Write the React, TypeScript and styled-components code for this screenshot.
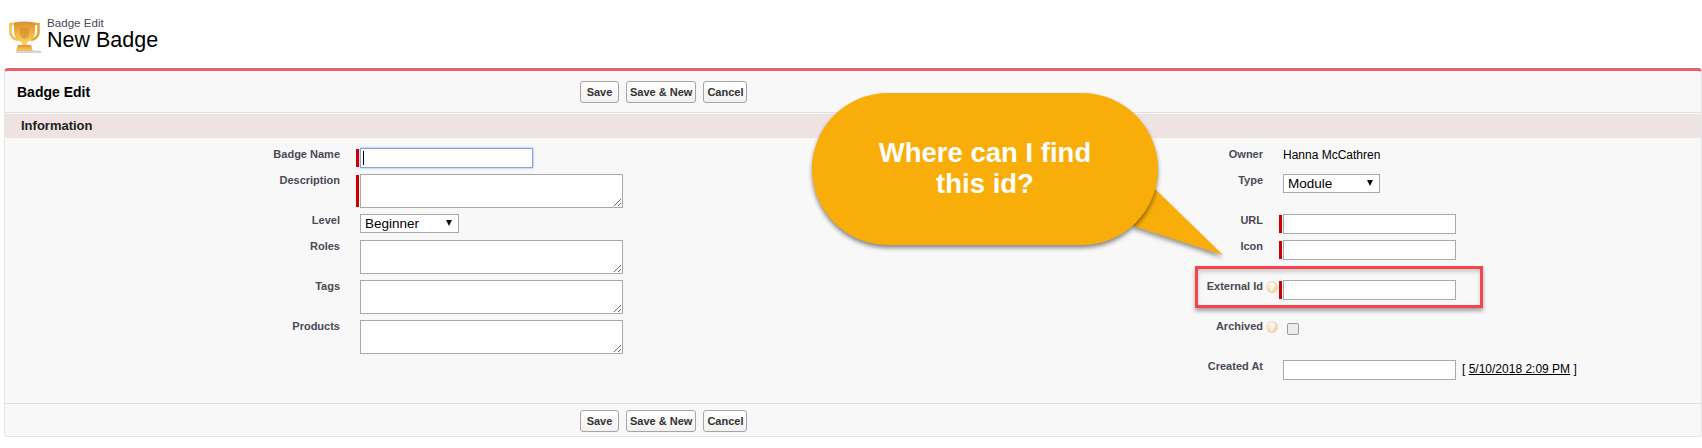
import * as React from 'react';
import styled, { createGlobalStyle } from 'styled-components';

const GlobalStyle = createGlobalStyle`
	html, body {
		margin: 0;
		padding: 0;
		background: #fff;
		font-family: "Liberation Sans", Arial, sans-serif;
	}
`;

const Page = styled.div`
	position: relative;
	width: 1702px;
	height: 448px;
	overflow: hidden;
`;

const PageHeader = styled.header`
	height: 68px;
	padding: 16px 0 0 9px;
	box-sizing: border-box;
	display: flex;
	align-items: flex-start;
	gap: 6px;
`;

const Titles = styled.div`
	display: flex;
	flex-direction: column;
`;

const Subtitle = styled.div`
	font-size: 11.6px;
	line-height: 13px;
	color: #4a4a56;
`;

const PageTitle = styled.h1`
	margin: 0;
	font-size: 21.5px;
	line-height: 22px;
	font-weight: 400;
	color: #000;
`;

const Panel = styled.section`
	margin-left: 4px;
	height: 369px;
	box-sizing: border-box;
	background: #f8f8f8;
	border: 1px solid #e6e6e6;
	border-top: 3px solid #e6636c;
	border-radius: 4px;
	display: flex;
	flex-direction: column;
`;

const ButtonBar = styled.div<{ $top?: boolean }>`
	flex: none;
	height: ${p => (p.$top ? 42 : 33)}px;
	box-sizing: border-box;
	display: flex;
	align-items: ${p => (p.$top ? 'center' : 'flex-start')};
	padding-top: ${p => (p.$top ? 0 : 6)}px;
	border-${p => (p.$top ? 'bottom' : 'top')}: 1px solid #dfdfdf;
`;

const BarTitle = styled.h2`
	margin: 0 0 0 12px;
	width: 563px;
	font-size: 14px;
	font-weight: 700;
	color: #000;
`;

const BarSpacer = styled.div`
	width: 575px;
`;

const Buttons = styled.div`
	display: flex;
	gap: 7px;
`;

const Button = styled.button`
	height: 22px;
	min-width: 39px;
	padding: 0 3px;
	box-sizing: border-box;
	border: 1px solid #a5a5a5;
	border-radius: 3px;
	background: linear-gradient(#fff, #f1f1f1);
	font-family: inherit;
	font-size: 11px;
	font-weight: 700;
	color: #333;
`;

const SectionBar = styled.div`
	flex: none;
	height: 24px;
	margin-top: 1px;
	padding-left: 16px;
	background: #eee2e2;
	font-size: 13px;
	font-weight: 700;
	line-height: 24px;
	color: #1f1f1f;
`;

const FormGrid = styled.div`
	flex: 1;
	padding-top: 10px;
	display: flex;
`;

const Column = styled.div<{ $width: number }>`
	width: ${p => p.$width}px;
	display: flex;
	flex-direction: column;
`;

const Row = styled.div<{ $tall?: boolean }>`
	height: ${p => (p.$tall ? 40 : 26)}px;
	display: flex;
	align-items: flex-start;
`;

const Label = styled.label<{ $width: number }>`
	width: ${p => p.$width}px;
	flex: none;
	text-align: right;
	font-size: 11px;
	font-weight: 700;
	line-height: 13px;
	color: #4a4a56;
`;

const HelpSlot = styled.span`
	width: 20px;
	flex: none;
	display: flex;
	padding: 1px 0 0 3px;
	box-sizing: border-box;
`;

const Field = styled.div<{ $required?: boolean; $afterHelp?: boolean }>`
	position: relative;
	margin-left: ${p => (p.$afterHelp ? 0 : 20)}px;
	display: flex;
	align-items: flex-start;

	${p => p.$required && `
		&::before {
			content: '';
			position: absolute;
			left: -4px;
			top: 1px;
			bottom: 1px;
			width: 3px;
			background: #c00;
		}
	`}
`;

const TextInput = styled.input<{ $focused?: boolean }>`
	width: 173px;
	height: 20px;
	padding: 0 2px;
	margin: 0;
	box-sizing: border-box;
	background: #fff;
	outline: none;
	border: 1px solid ${p => (p.$focused ? '#7ea6e0' : '#a9a9a9')};
	box-shadow: ${p => (p.$focused ? '0 0 2px #7ea6e0' : 'none')};
	font-family: inherit;
	font-size: 12px;
`;

const Caret = styled.span`
	position: absolute;
	left: 3px;
	top: 3px;
	width: 1px;
	height: 14px;
	background: #000;
`;

const TextArea = styled.textarea`
	display: block;
	width: 263px;
	height: 34px;
	margin: 0;
	padding: 2px;
	box-sizing: border-box;
	background: #fff;
	border: 1px solid #a9a9a9;
	outline: none;
	resize: both;
`;

const SelectWrap = styled.div<{ $width: number }>`
	position: relative;
	width: ${p => p.$width}px;

	&::after {
		content: '';
		position: absolute;
		right: 7px;
		top: 6px;
		border-left: 3px solid transparent;
		border-right: 3px solid transparent;
		border-top: 6px solid #111;
	}
`;

const Select = styled.select`
	display: block;
	width: 100%;
	height: 19px;
	margin: 0;
	padding: 0 4px;
	box-sizing: border-box;
	appearance: none;
	border: 1px solid #a9a9a9;
	border-radius: 0;
	background: #fff;
	font-family: inherit;
	font-size: 13.5px;
	color: #000;
`;

const Output = styled.span`
	padding-top: 1px;
	font-size: 12px;
	line-height: 13px;
	color: #000;
`;

const Check = styled.input`
	appearance: none;
	width: 12px;
	height: 12px;
	margin: 3px 0 0 4px;
	box-sizing: border-box;
	background: #ececec;
	border: 1px solid #9a9a9a;
	border-radius: 2px;
`;

const DateHint = styled.span`
	margin: 2px 0 0 6px;
	font-size: 12px;
	line-height: 14px;
	color: #000;
	white-space: nowrap;
`;

const DateLink = styled.a`
	color: #000;
	text-decoration: underline;
`;

const Bubble = styled.div`
	position: absolute;
	left: 812px;
	top: 93px;
	width: 346px;
	height: 152px;
	box-sizing: border-box;
	border-radius: 76px;
	background: #f9ad08;
	box-shadow: 0 3px 4px rgba(0, 0, 0, 0.45);
	display: flex;
	align-items: center;
	justify-content: center;
	padding-bottom: 3px;
	text-align: center;
	font-size: 27.5px;
	font-weight: 700;
	line-height: 31px;
	color: #fff;
`;

const BubbleText = styled.div`
	width: 240px;
`;

const Tail = styled.svg`
	position: absolute;
	left: 1120px;
	top: 180px;
	overflow: visible;
	filter: drop-shadow(0 3px 2px rgba(0, 0, 0, 0.4));
`;

const Highlight = styled.div`
	position: absolute;
	left: 1195px;
	top: 266px;
	width: 288px;
	height: 42px;
	box-sizing: border-box;
	border: 3px solid #f4444c;
	box-shadow: 0 3px 4px rgba(0, 0, 0, 0.35), inset 0 3px 4px rgba(0, 0, 0, 0.18);
`;

const TrophySvg = styled.svg`
	flex: none;
	margin-top: 5px;
`;

const TrophyIcon = () => (
	<TrophySvg width="32" height="32" viewBox="0 0 32 32">
		<defs>
			<linearGradient id="cup" x1="0" x2="0" y1="0" y2="1">
				<stop offset="0" stopColor="#d98f35" />
				<stop offset="0.5" stopColor="#f3b341" />
				<stop offset="1" stopColor="#fdd265" />
			</linearGradient>
		</defs>
		<path d="M6 3 H1.5 V11 Q1.5 17 9 19" fill="none" stroke="#f3c04f" strokeWidth="2.6" />
		<path d="M25 3 H29.5 V11 Q29.5 17 22 19" fill="none" stroke="#e6a436" strokeWidth="2.6" />
		<path d="M5 1.5 Q15.5 -0.5 26 1.5 V10 Q26 19 18 21 V24 H13 V21 Q5 19 5 10 Z" fill="url(#cup)" />
		<path d="M11 7 H20 V13 Q20 16 15.5 18 Q11 16 11 13 Z" fill="#c98a2f" opacity="0.55" />
		<path d="M9 24 H22 L24 30 H7 Z" fill="url(#cup)" />
		<rect x="7" y="29.5" width="25" height="2.5" fill="#aaa" opacity="0.5" />
	</TrophySvg>
);

const HelpOrb = () => (
	<svg width="12" height="12" viewBox="0 0 12 12">
		<defs>
			<radialGradient id="orb" cx="0.4" cy="0.35" r="0.75">
				<stop offset="0" stopColor="#fbf3e6" />
				<stop offset="1" stopColor="#eccb9f" />
			</radialGradient>
		</defs>
		<circle cx="6" cy="6" r="6" fill="url(#orb)" />
		<text x="6" y="9.5" textAnchor="middle" fontSize="10" fontWeight="700" fill="#fff" fontFamily="Liberation Sans">?</text>
	</svg>
);

const ActionButtons = () => (
	<Buttons>
		<Button>Save</Button>
		<Button>Save &amp; New</Button>
		<Button>Cancel</Button>
	</Buttons>
);

const LEFT_LABEL = 335;
const RIGHT_LABEL = 395;

export default function App() {
	return (
		<Page>
			<GlobalStyle />
			<PageHeader>
				<TrophyIcon />
				<Titles>
					<Subtitle>Badge Edit</Subtitle>
					<PageTitle>New Badge</PageTitle>
				</Titles>
			</PageHeader>
			<Panel>
				<ButtonBar $top>
					<BarTitle>Badge Edit</BarTitle>
					<ActionButtons />
				</ButtonBar>
				<SectionBar>Information</SectionBar>
				<FormGrid>
					<Column $width={863}>
						<Row>
							<Label $width={LEFT_LABEL}>Badge Name</Label>
							<Field $required>
								<TextInput $focused />
								<Caret />
							</Field>
						</Row>
						<Row $tall>
							<Label $width={LEFT_LABEL}>Description</Label>
							<Field $required><TextArea /></Field>
						</Row>
						<Row>
							<Label $width={LEFT_LABEL}>Level</Label>
							<Field>
								<SelectWrap $width={99}>
									<Select defaultValue="Beginner"><option>Beginner</option></Select>
								</SelectWrap>
							</Field>
						</Row>
						<Row $tall>
							<Label $width={LEFT_LABEL}>Roles</Label>
							<Field><TextArea /></Field>
						</Row>
						<Row $tall>
							<Label $width={LEFT_LABEL}>Tags</Label>
							<Field><TextArea /></Field>
						</Row>
						<Row $tall>
							<Label $width={LEFT_LABEL}>Products</Label>
							<Field><TextArea /></Field>
						</Row>
					</Column>
					<Column $width={800}>
						<Row>
							<Label $width={RIGHT_LABEL}>Owner</Label>
							<Field><Output>Hanna McCathren</Output></Field>
						</Row>
						<Row $tall>
							<Label $width={RIGHT_LABEL}>Type</Label>
							<Field>
								<SelectWrap $width={97}>
									<Select defaultValue="Module"><option>Module</option></Select>
								</SelectWrap>
							</Field>
						</Row>
						<Row>
							<Label $width={RIGHT_LABEL}>URL</Label>
							<Field $required><TextInput /></Field>
						</Row>
						<Row $tall>
							<Label $width={RIGHT_LABEL}>Icon</Label>
							<Field $required><TextInput /></Field>
						</Row>
						<Row $tall>
							<Label $width={RIGHT_LABEL}>External Id</Label>
							<HelpSlot><HelpOrb /></HelpSlot>
							<Field $required $afterHelp><TextInput /></Field>
						</Row>
						<Row $tall>
							<Label $width={RIGHT_LABEL}>Archived</Label>
							<HelpSlot><HelpOrb /></HelpSlot>
							<Field $afterHelp><Check type="checkbox" /></Field>
						</Row>
						<Row $tall>
							<Label $width={RIGHT_LABEL}>Created At</Label>
							<Field>
								<TextInput />
								<DateHint>[ <DateLink>5/10/2018 2:09 PM</DateLink> ]</DateHint>
							</Field>
						</Row>
					</Column>
				</FormGrid>
				<ButtonBar>
					<BarSpacer />
					<ActionButtons />
				</ButtonBar>
			</Panel>
			<Highlight />
			<Tail width="110" height="80">
				<path d="M34 8 L103 75 L13 46 Z" fill="#f9ad08" />
			</Tail>
			<Bubble><BubbleText>Where can I find this id?</BubbleText></Bubble>
		</Page>
	);
}
